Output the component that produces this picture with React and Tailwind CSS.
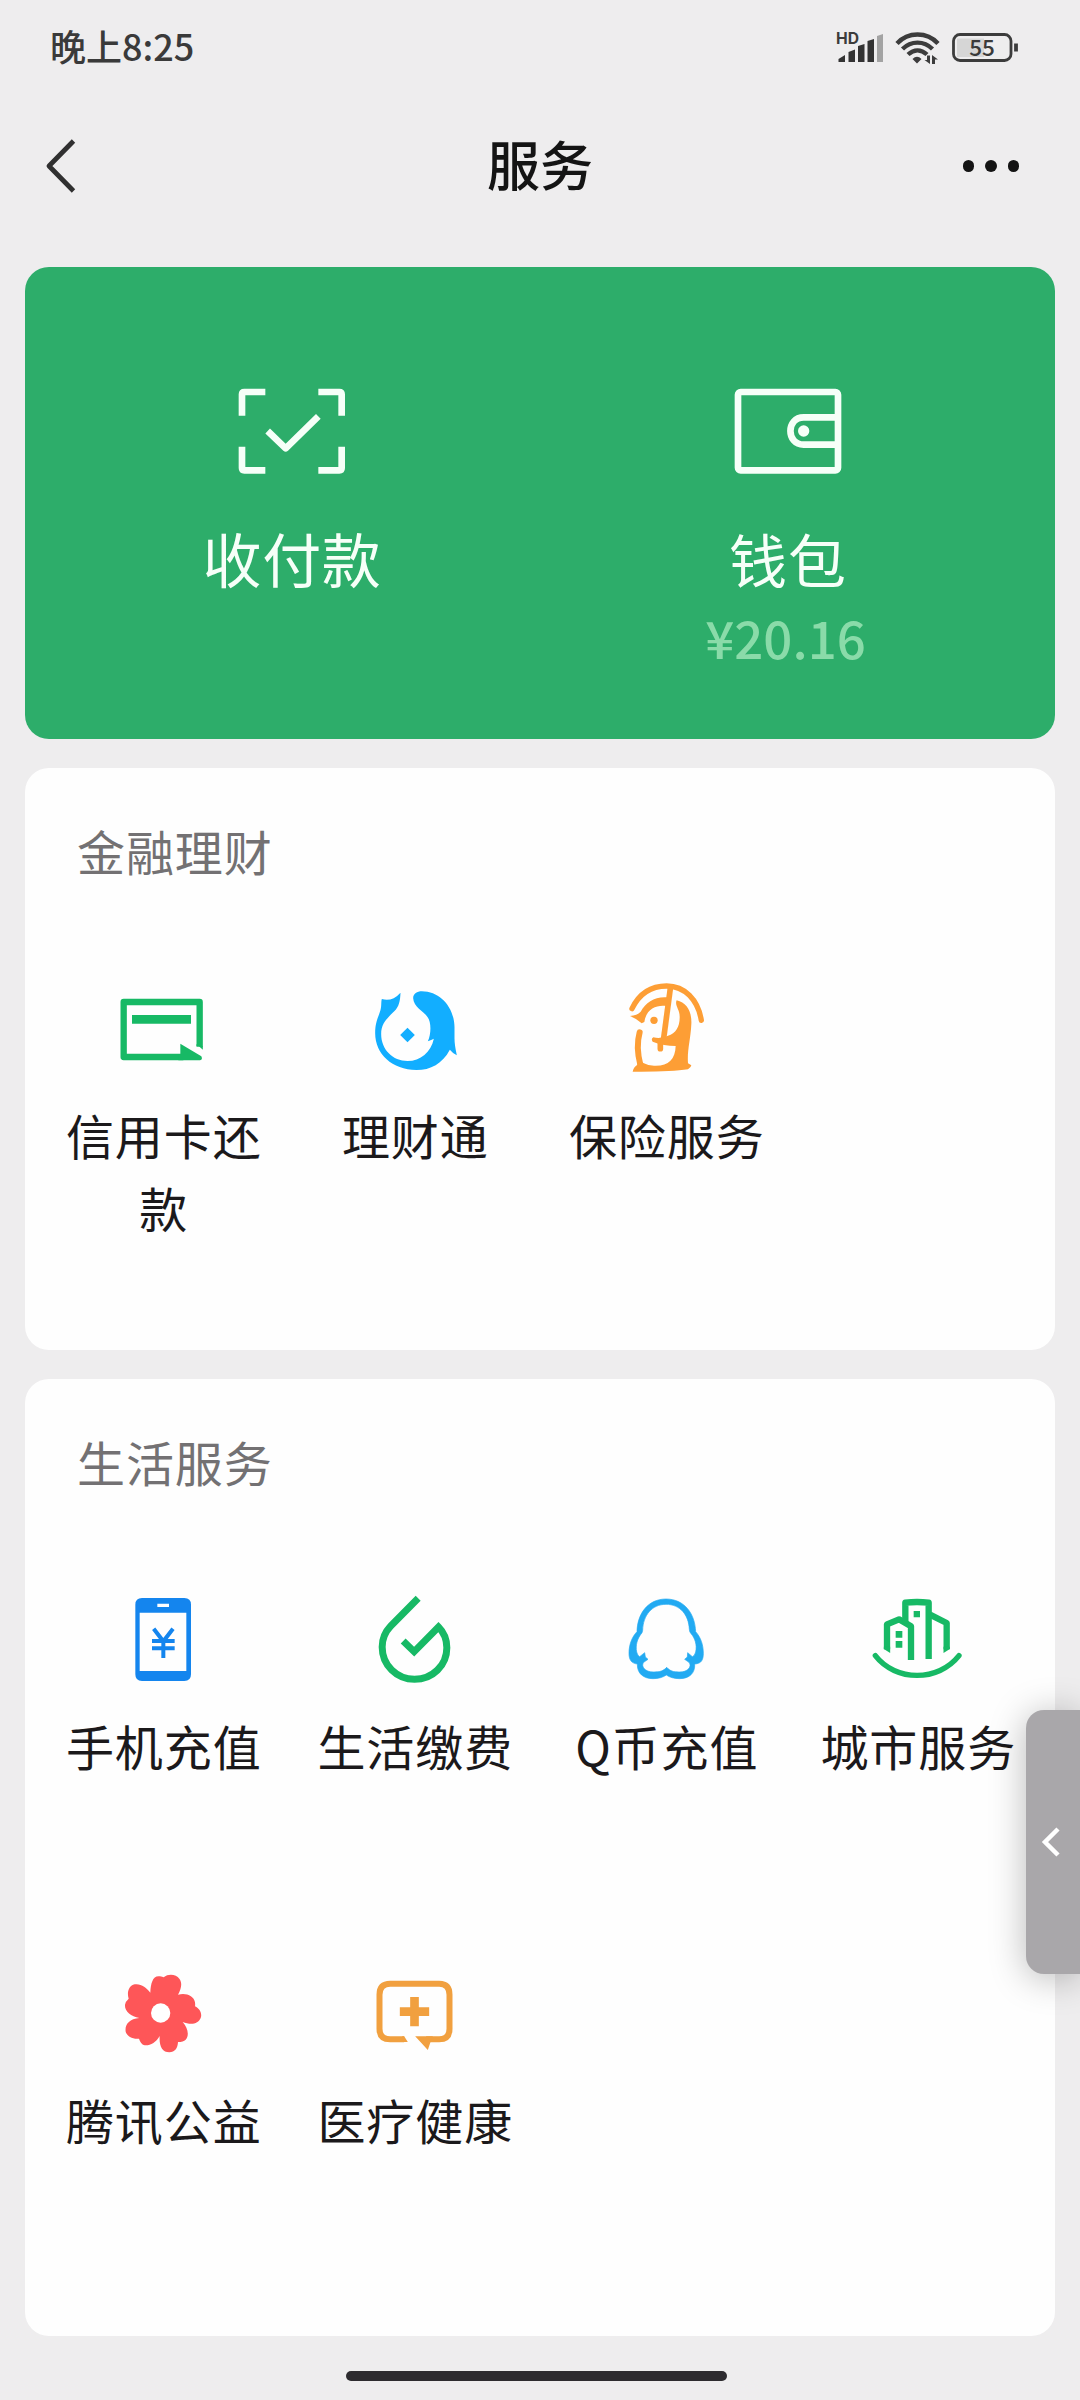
const GREEN = '#17b965';

function CreditCardIcon() {
  return (
    <svg className="size-[120px]" viewBox="189 507 360 360" fill="none">
      <path d="M479 740V606H251V771H430" stroke={GREEN} strokeWidth="19" strokeLinejoin="round" />
      <path d="M469.500 732L488.500 749V738H469.500Z" fill={GREEN} />
      <path d="M421 731L484 769Q489 780 480 780.500H415V762H421Z" fill={GREEN} />
      <path d="M276 645H453V671H276Z" fill={GREEN} />
    </svg>
  );
}

function WealthIcon() {
  return (
    <svg className="size-[120px]" viewBox="43.5 27 360 360" fill="#12aeff">
      <path d="M127 117C146 123 165 118 183 98C182 124 178 140 165 153C143 175 125 190 125 222C125 269 160 303 204 303C243 303 274 277 283 236Q276 240 265 244C275 221 276 188 264 171C252 154 222 141 221 115C221 101 233 94 247 94C305 94 347 147 345 207L345 235Q345 255 352 286Q340 280 331 269C309 311 273 330 231 330C158 330 107 282 107 220C107 186 116 173 123 150C127 135 124 127 127 117Z" />
      <path d="M204 203L226 225L204 247L182 225Z" />
    </svg>
  );
}

function InsuranceIcon() {
  return (
    <svg className="size-[120px]" viewBox="198 87 360 360" fill="none">
      <g stroke="#fd9e35" strokeLinecap="round">
        <path d="M276 206C299 158 337 138 380 138C434 138 474 179 484 241" strokeWidth="16" />
        <path d="M391 145L371 295" strokeWidth="17" strokeLinecap="butt" />
        <path d="M361 302V326" strokeWidth="17" />
        <path d="M299 277C290 310 292 340 301 374" strokeWidth="18" />
      </g>
      <path fill="#fd9e35" d="M270 228Q291 226 302 215C318 187 344 169 382 172L379 198C351 194 319 205 313 246L305 250Q292 237 270 228Z" />
      <circle cx="342" cy="241" r="11" fill="#fd9e35" />
      <path fill="#fd9e35" d="M410 181C440 188 456 215 454 252C452 298 441 330 444 370L454 376Q453 383 444 388Q392 396 278 395Q280 382 292 374L294 350Q305 376 342 377C384 379 406 359 407 318Q372 318 338 305Q332 297 340 292Q364 297 384 287C408 280 420 258 419 229C419 209 403 195 410 181Z" />
    </svg>
  );
}

function PhoneIcon() {
  return (
    <svg className="size-[120px]" viewBox="129 60 360 360" fill="none">
      <path fillRule="evenodd" fill="#1485ee" d="M246 114H373Q393 114 393 134V343Q393 363 373 363H246Q226 363 226 343V134Q226 114 246 114ZM239 158V333H379V158ZM292 131V141H327V131Z" />
      <path d="M281 206L310 244L339 206M276 243H344M276 265H344M310 243V294" stroke="#1485ee" strokeWidth="12" />
    </svg>
  );
}

function UtilitiesIcon() {
  return (
    <svg className="size-[120px]" viewBox="883.5 60 360 360" fill="none">
      <path d="M1076 115L993 199C975 218 968 238 968 261C968 316 1012 358 1065 358C1119 358 1162 316 1162 263C1162 241 1154 218 1137 201L1064 275L1031 243" stroke={GREEN} strokeWidth="21" />
    </svg>
  );
}

function QCoinIcon() {
  return (
    <svg className="size-[120px]" viewBox="138 60 360 360" fill="none">
      <path fillRule="evenodd" fill="#22aaf2" stroke="#22aaf2" strokeWidth="2" d="M318 117C374 117 405 162 407 215C422 232 430 254 430 280C430 300 424 311 404 312C406 339 388 356 359 356C343 356 329 352 319 345C309 352 295 356 279 356C251 356 231 341 232 312C214 310 207 299 207 280C207 253 216 231 231 215C232 162 263 117 318 117ZM318 133C276 133 249 166 248 211Q247 219 243 222C232 237 226 255 230 276Q233 288 239 290L254 278L256 291L264 298L251 307C242 318 254 337 282 336C300 336 310 333 320 322C330 333 340 336 357 336C384 337 397 319 387 307L374 298L382 291L383 278L397 290Q404 288 407 276C412 254 404 234 394 222Q388 216 388 208C386 164 360 133 318 133Z" />
    </svg>
  );
}

function CityIcon() {
  return (
    <svg className="size-[120px]" viewBox="891 60 360 360" fill="none">
      <g stroke={GREEN} strokeWidth="19" strokeLinejoin="round">
        <path d="M981 268V193L1017 178L1053 199V300" />
        <path d="M1036 190V128Q1071 124 1106 128V297" />
        <path d="M1110 164L1160 189V268" />
        <path d="M946 287C1007 366 1135 366 1197 287" strokeWidth="16" strokeLinecap="round" />
      </g>
      <path d="M971.500 260H990.500V279L971.500 267ZM1150.500 260H1169.500V267L1150.500 279ZM1061 153H1080V172H1061ZM1007 213H1027V233H1007ZM1007 243H1027V263H1007Z" fill={GREEN} />
    </svg>
  );
}

function CharityIcon() {
  return (
    <svg className="size-[120px]" viewBox="129 42 360 360">
      <path fill="#fe5658" d="M271 158C272 129 279 105 300 109Q308 110 311 112C325 100 349 103 358 116C367 128 365 144 354 164C376 157 402 166 405 187Q406 194 405 199C420 206 427 221 422 234C415 252 393 256 368 246C383 262 389 286 377 299Q370 306 354 306C353 325 345 336 328 337C307 337 297 319 299 288C288 309 266 319 251 315Q242 311 237 296C220 299 201 289 197 275C194 254 207 237 238 234C212 229 193 214 195 194Q196 185 206 176C200 158 206 137 224 133C243 130 259 143 271 158Z" />
      <circle cx="302" cy="219" r="29" fill="#fff" />
    </svg>
  );
}

function MedicalIcon() {
  return (
    <svg className="size-[120px]" viewBox="883.5 42 360 360" fill="none">
      <path d="M1034 298H992Q960 298 960 266V164Q960 131 992 131H1139Q1170 131 1170 164V266Q1170 298 1139 298H1100" stroke="#f1a03f" strokeWidth="18" />
      <path d="M1028 289H1034L1045 306H1028ZM1067 289H1120L1113 306L1105 330ZM1052 171H1078V202H1109V228H1078V259H1052V228H1021V202H1052Z" fill="#f1a03f" />
    </svg>
  );
}

function ScanIcon() {
  return (
    <svg className="h-[86px] w-[108px]" viewBox="173 85 324 258" fill="none" stroke="#f6fff8" strokeWidth="20">
      <path d="M255 97H192Q185 97 185 104V168M414 97H477Q484 97 484 104V168M255 332H192Q185 332 185 325V261M414 332H477Q484 332 484 325V261" />
      <path d="M262 214L316 266L414 170" strokeLinejoin="round" />
    </svg>
  );
}

function WalletIcon() {
  return (
    <svg className="h-[86px] w-[108px]" viewBox="164 85 324 258" fill="none" stroke="#f6fff8" strokeWidth="20">
      <rect x="176" y="97" width="300" height="235" rx="8" />
      <path d="M470 173H373C320 173 320 255 373 255H470" />
      <circle cx="373" cy="214" r="17" fill="#f6fff8" stroke="none" />
    </svg>
  );
}

function StatusIcons() {
  return (
    <svg className="h-[50px] w-[200px]" viewBox="830 20 200 50" fill="none">
      <text x="836" y="42.500" fontSize="15.5" fontWeight="700" fill="#3c3c3c" fontFamily="Inter, sans-serif" textLength="23" lengthAdjust="spacingAndGlyphs">HD</text>
      <path fill="#333" d="M838.500 61V58L845 54V61ZM848.500 61V51L855 48.500V61ZM858 61V45L864.500 43V61ZM867.500 61V40L874 38V61Z" />
      <path fill="#a3a3a3" d="M877 61V35L883 33V61Z" />
      <g stroke="#3c3c3c" strokeWidth="4.400">
        <path d="M897 42.500C908 30.500 927 30.500 938 42.500" />
        <path d="M902.500 48C911 39.500 924 39.500 932.500 48" />
        <path d="M908 53.500C914 48 921 48 927 53.500" />
      </g>
      <path fill="#3c3c3c" d="M912.500 58Q917 53.500 921.500 58L917 62.500ZM930 54.500V63L924.500 59H927V54.500ZM932 63V54L938 58.500H935V63Z" />
      <path fill="#d6d6d6" d="M957 37.500H984V56H957Z" />
      <rect x="953.500" y="33.500" width="57.500" height="26" rx="6.500" stroke="#3c3c3c" strokeWidth="2.800" />
      <path d="M1016 42.500V50.500" stroke="#3c3c3c" strokeWidth="3.800" />
      <text x="982" y="54.500" fontSize="22.500" fontWeight="500" textAnchor="middle" fill="#3a3a3a" fontFamily="'Noto Sans CJK SC', sans-serif">55</text>
    </svg>
  );
}

function ServiceSection({ title, items, className }) {
  return (
    <section className={`rounded-[24px] bg-[#fefefe] px-3 pt-[46px] ${className}`}>
      <h2 className="pl-[40px] text-[48px] leading-[73px] tracking-[0.9px] text-[#737173]">{title}</h2>
      <div className="mt-[82px] grid grid-cols-4">
        {items.map(({ label, Icon }) => (
          <div key={label} className="flex h-[374px] flex-col items-center">
            <Icon />
            <span className="mt-[9px] w-[200px] pl-[2px] text-center text-[48px] leading-[73px] tracking-[0.9px] text-[#1b191b]">{label}</span>
          </div>
        ))}
      </div>
    </section>
  );
}

const finance = [
  { label: '信用卡还款', Icon: CreditCardIcon },
  { label: '理财通', Icon: WealthIcon },
  { label: '保险服务', Icon: InsuranceIcon },
];

const life = [
  { label: '手机充值', Icon: PhoneIcon },
  { label: '生活缴费', Icon: UtilitiesIcon },
  { label: 'Q币充值', Icon: QCoinIcon },
  { label: '城市服务', Icon: CityIcon },
  { label: '腾讯公益', Icon: CharityIcon },
  { label: '医疗健康', Icon: MedicalIcon },
];

export default function App() {
  return (
    <div className="relative flex h-[2400px] w-[1080px] flex-col overflow-hidden bg-[#eeedee] font-['Noto_Sans_CJK_SC',sans-serif]">
      <div className="flex h-[92px] items-center justify-between px-[50px]">
        <span className="-mt-[3px] text-[36px] leading-[50px] font-medium text-[#3a3a3a]">晚上8:25</span>
        <StatusIcons />
      </div>

      <header className="flex h-[175px] items-start justify-between px-[45px] pt-[38px]">
        <svg className="h-[72px] w-[60px]" viewBox="45 130 60 72" fill="none">
          <path d="M73.500 141L49 166L73.500 191" stroke="#303030" strokeWidth="4.800" strokeLinejoin="round" />
        </svg>
        <h1 className="-mt-[3px] text-[53px] leading-[72px] font-medium text-[#141414]">服务</h1>
        <div className="flex h-[72px] w-[60px] items-center justify-end gap-[11px] pr-[16px]">
          <i className="size-[11.500px] shrink-0 rounded-full bg-[#141414]" />
          <i className="size-[11.500px] shrink-0 rounded-full bg-[#141414]" />
          <i className="size-[11.500px] shrink-0 rounded-full bg-[#141414]" />
        </div>
      </header>

      <section className="mx-[25px] grid h-[472px] grid-cols-2 rounded-[24px] bg-[#2dad6a] px-[19px] pt-[121px]">
        <div className="flex flex-col items-center">
          <ScanIcon />
          <span className="mt-[44px] text-[59px] leading-[80px] tracking-[0.6px] text-[#f6fff8]">收付款</span>
        </div>
        <div className="flex flex-col items-center">
          <WalletIcon />
          <span className="mt-[44px] text-[58px] leading-[80px] tracking-[0.9px] text-[#f6fff8]">钱包</span>
          <span className="mt-[3px] mr-[5px] text-[51px] leading-[72px] font-medium text-[#8adba9]">¥20.16</span>
        </div>
      </section>

      <ServiceSection title="金融理财" items={finance} className="mx-[25px] mt-[29px] h-[582px]" />
      <ServiceSection title="生活服务" items={life} className="mx-[25px] mt-[29px] h-[957px]" />

      <div className="mt-[35px] ml-[346px] h-[10px] w-[381px] rounded-full bg-[#2d2b2f]" />

      <div className="absolute top-[1710px] right-0 flex h-[264px] w-[54px] items-center rounded-l-[18px] bg-[#a9a7aa] pl-[14px] shadow-[0_4px_36px_rgba(0,0,0,0.28)]">
        <svg className="h-[32px] w-[22px]" viewBox="0 0 22 32" fill="none">
          <path d="M18 3L5 16L18 29" stroke="#fff" strokeWidth="4.500" />
        </svg>
      </div>
    </div>
  );
}
